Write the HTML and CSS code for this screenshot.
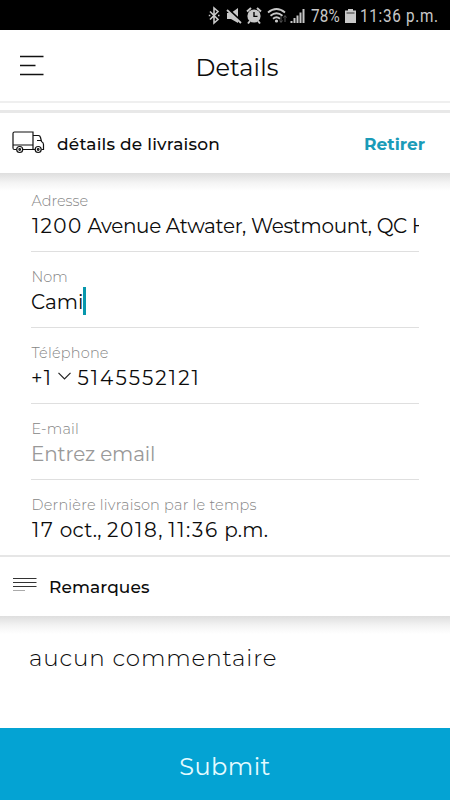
FILE: index.html
```html
<!DOCTYPE html>
<html lang="fr">

<head>
    <meta charset="UTF-8">
    <meta name="viewport" content="width=device-width, initial-scale=1.0">
    <title>Details</title>
    <link rel="stylesheet" href="styles.css">
</head>

<body>
    <div class="status-bar">
        <svg class="status-icons" width="98" height="20" viewBox="0 0 98 20">
            <!-- Bluetooth -->
            <path d="M2 5.5l8 8-4 3.5V2l4 3.5-8 8" fill="none" stroke="#c8c8c8" stroke-width="1.6" />
            <path d="M.8 9.5h1.5M10 9.5h1.5" stroke="#c8c8c8" stroke-width="1.6" />
            <!-- Muted speaker -->
            <path d="M19 7h4l7-5v15l-7-4h-4z" fill="#c8c8c8" />
            <path d="M19 2.5l15 14" stroke="#000" stroke-width="3" />
            <path d="M19 4l14 13" stroke="#c8c8c8" stroke-width="1.8" />
            <!-- Alarm -->
            <circle cx="46" cy="10" r="6.6" fill="#c8c8c8" />
            <path d="M39 5.5l4-3.5M49 2l4 3.5M42 15l-2 2.5M50 15l2 2.5" stroke="#c8c8c8" stroke-width="2" />
            <path d="M46 6v4.4h3.5" fill="none" stroke="#000" stroke-width="1.4" />
            <!-- Wifi -->
            <path d="M60 6.500q8.500-7 17 0M62.500 9.700q6-5 12 0M65 12.800q3.500-3 7 0" fill="none" stroke="#c8c8c8" stroke-width="1.8" />
            <circle cx="68.500" cy="15" r="1.600" fill="#c8c8c8" />
            <path d="M73 10v6M71.500 14.500l1.500 2 1.500-2M77 16v-6M75.500 11.500l1.500-2 1.500 2" fill="none" stroke="#555" />
            <!-- Signal -->
            <path d="M83.500 17v-2M86.500 17v-5M89.500 17v-7.500M92.500 17V6.500M95.500 17V3" stroke="#c8c8c8" stroke-width="2" />
        </svg>
        <span class="battery-level">78%</span>
        <svg class="battery" width="11" height="14" viewBox="0 0 11 14">
            <path d="M3 0h5v1.500h3V14H0V1.500h3z" fill="#c8c8c8" />
            <path d="M1.500 4h8" stroke="#333" />
        </svg>
        <span class="clock">11:36 p.m.</span>
    </div>

    <header class="header">
        <svg class="menu-icon" width="24" height="21" viewBox="0 0 24 21">
            <path d="M0 1.500h23.500M0 10.500h15.500M0 19.500h23.500" stroke="#111" stroke-width="1.500" />
        </svg>
        <h1>Details</h1>
    </header>

    <main>
        <section class="section-bar delivery">
            <svg class="truck" width="33" height="23" viewBox="0 0 33 23" fill="none" stroke="#111" stroke-width="1.200">
                <path d="M4.500 18.500H2.500q-1.500 0-1.500-1.500V2.500Q1 1 2.500 1H21v17.500H11" />
                <path d="M1 14h20M21 4.500h5.500q1.500 0 2 2l1 4q2 1 2 3v5h-2M21 18.500h2M25 9.500h4" />
                <circle cx="7.700" cy="18.500" r="3" />
                <circle cx="26.200" cy="18.500" r="3" />
                <circle cx="7.700" cy="18.500" r=".8" />
                <circle cx="26.200" cy="18.500" r=".8" />
            </svg>
            <h2>détails de livraison</h2>
            <a class="remove" href="#">Retirer</a>
        </section>

        <form class="fields">
            <div class="field">
                <span class="label">Adresse</span>
                <span class="value value-address"><span class="digits">1200</span> Avenue Atwater, Westmount, QC H</span>
            </div>
            <div class="field">
                <span class="label">Nom</span>
                <span class="value">Cami<i class="caret"></i></span>
            </div>
            <div class="field">
                <span class="label label-phone">Téléphone</span>
                <span class="value value-phone">
                    <span class="prefix">+1</span>
                    <svg width="13" height="8" viewBox="0 0 13 8">
                        <path d="M.5 .8l6 6 6-6" fill="none" stroke="#222" stroke-width="1.200" />
                    </svg>
                    <span class="number">5145552121</span>
                </span>
            </div>
            <div class="field">
                <span class="label label-email">E-mail</span>
                <span class="value placeholder">Entrez email</span>
            </div>
            <div class="field">
                <span class="label label-time">Dernière livraison par le temps</span>
                <span class="value value-time"><span class="digits">17</span> oct., <span class="digits">2018</span>, <span class="digits">11:36</span> p.m.</span>
            </div>
        </form>

        <section class="section-bar notes">
            <svg class="lines" width="24" height="16" viewBox="0 0 24 16">
                <path d="M0 1.500h23.500M0 5.500h23.500M0 9.500h23.500" stroke="#333" />
                <path d="M0 13.500h12" stroke="#aaa" />
            </svg>
            <h2>Remarques</h2>
        </section>
        <p class="comment">aucun commentaire</p>
    </main>

    <button class="submit">Submit</button>
</body>

</html>
```
FILE: styles.css
```css
* {
    box-sizing: border-box;
}

body {
    margin: 0;
    height: 800px;
    display: flex;
    flex-direction: column;
    overflow: hidden;
    background-color: #fff;
    color: #0c0c0c;
    font-family: Montserrat, "Inter", sans-serif;
}

h1,
h2,
p {
    margin: 0;
}

/* Phone status bar */
.status-bar {
    flex: none;
    display: flex;
    align-items: center;
    height: 30px;
    padding: 2px 0 0 208px;
    background-color: #000;
    color: #c8c8c8;
    font: 18px/28px Roboto, sans-serif;
    white-space: nowrap;
}

.status-icons {
    flex: none;
}

.battery-level,
.clock {
    transform: scaleX(0.85);
    transform-origin: left;
}

.battery-level {
    width: 31px;
    margin-left: 5px;
    letter-spacing: 0.2px;
}

.battery {
    flex: none;
    margin-left: 3px;
}

.clock {
    margin-left: 4px;
    letter-spacing: 0.8px;
}

/* Page header */
.header {
    flex: none;
    display: grid;
    grid-template-columns: 100px 1fr 76px;
    align-items: center;
    height: 73px;
    padding-top: 3px;
    border-bottom: 2px solid #efefef;
}

.menu-icon {
    margin: 0 0 4px 20px;
}

.header h1 {
    text-align: center;
    font-size: 24px;
    font-weight: 400;
    letter-spacing: 0.1px;
}

main {
    flex: 1;
}

/* White bars with a shadow fading out underneath */
.section-bar {
    position: relative;
    display: flex;
    align-items: center;
    background-color: #fff;
}

.section-bar::after {
    content: "";
    position: absolute;
    top: 100%;
    left: 0;
    right: 0;
    height: 18px;
    background: linear-gradient(#dedede, #f4f4f4 55%, #fff);
}

.section-bar h2 {
    font-size: 17px;
    font-weight: 500;
}

.delivery {
    height: 63px;
    margin-top: 7px;
    padding: 2px 25px 0 12px;
    border-top: 3px solid #e8e8e8;
}

.delivery h2 {
    margin-left: 12px;
    letter-spacing: 0.2px;
}

.truck {
    margin-bottom: 4px;
}

.remove {
    margin-left: auto;
    color: #1a9bb8;
    font-size: 17px;
    font-weight: 700;
    text-decoration: none;
}

.fields {
    padding: 3px 31px 0;
}

.field {
    display: flex;
    flex-direction: column;
    height: 76px;
    padding-top: 16px;
    border-bottom: 1px solid #dfdfdf;
}

.field:last-child {
    height: 75px;
    border-bottom: 0;
}

.label {
    height: 18px;
    padding-left: 0.5px;
    color: #858585;
    font-size: 14.5px;
    font-weight: 300;
    line-height: 19px;
}

.label-phone,
.label-email {
    letter-spacing: 0.2px;
}

.label-time {
    letter-spacing: 0.22px;
}

.value {
    display: flex;
    align-items: center;
    height: 32px;
    overflow: hidden;
    font-size: 20px;
    font-weight: 400;
    line-height: 32px;
    white-space: pre;
}

.value-address {
    padding-left: 1px;
    letter-spacing: -0.35px;
}

.digits {
    letter-spacing: 1.4px;
}

.caret {
    width: 3px;
    height: 28px;
    margin-bottom: 3px;
    background-color: #0797ac;
}

.value-phone {
    white-space: nowrap;
}

.value-phone svg {
    margin: 0 6px 4px 6px;
}

.prefix {
    letter-spacing: 1.5px;
}

.number {
    letter-spacing: 2.1px;
}

.placeholder {
    color: #999;
    letter-spacing: -0.15px;
}

.value-time {
    padding-left: 1px;
    letter-spacing: 0.2px;
}

.value-time .digits {
    letter-spacing: 1.7px;
}

.notes {
    height: 61px;
    padding: 1px 13px 0;
    border-top: 2px solid #e6e6e6;
}

.notes h2 {
    margin-left: 12px;
    letter-spacing: 0.1px;
}

.lines {
    margin-bottom: 4px;
}

.comment {
    padding: 26px 0 0 29px;
    font-size: 23px;
    font-weight: 300;
    line-height: 32px;
    letter-spacing: 0.85px;
}

.submit {
    flex: none;
    height: 72px;
    padding: 5px 0 0;
    border: 0;
    background-color: #04a3d3;
    color: #e4fbff;
    font-family: inherit;
    font-size: 24px;
    letter-spacing: 0.5px;
}
```
